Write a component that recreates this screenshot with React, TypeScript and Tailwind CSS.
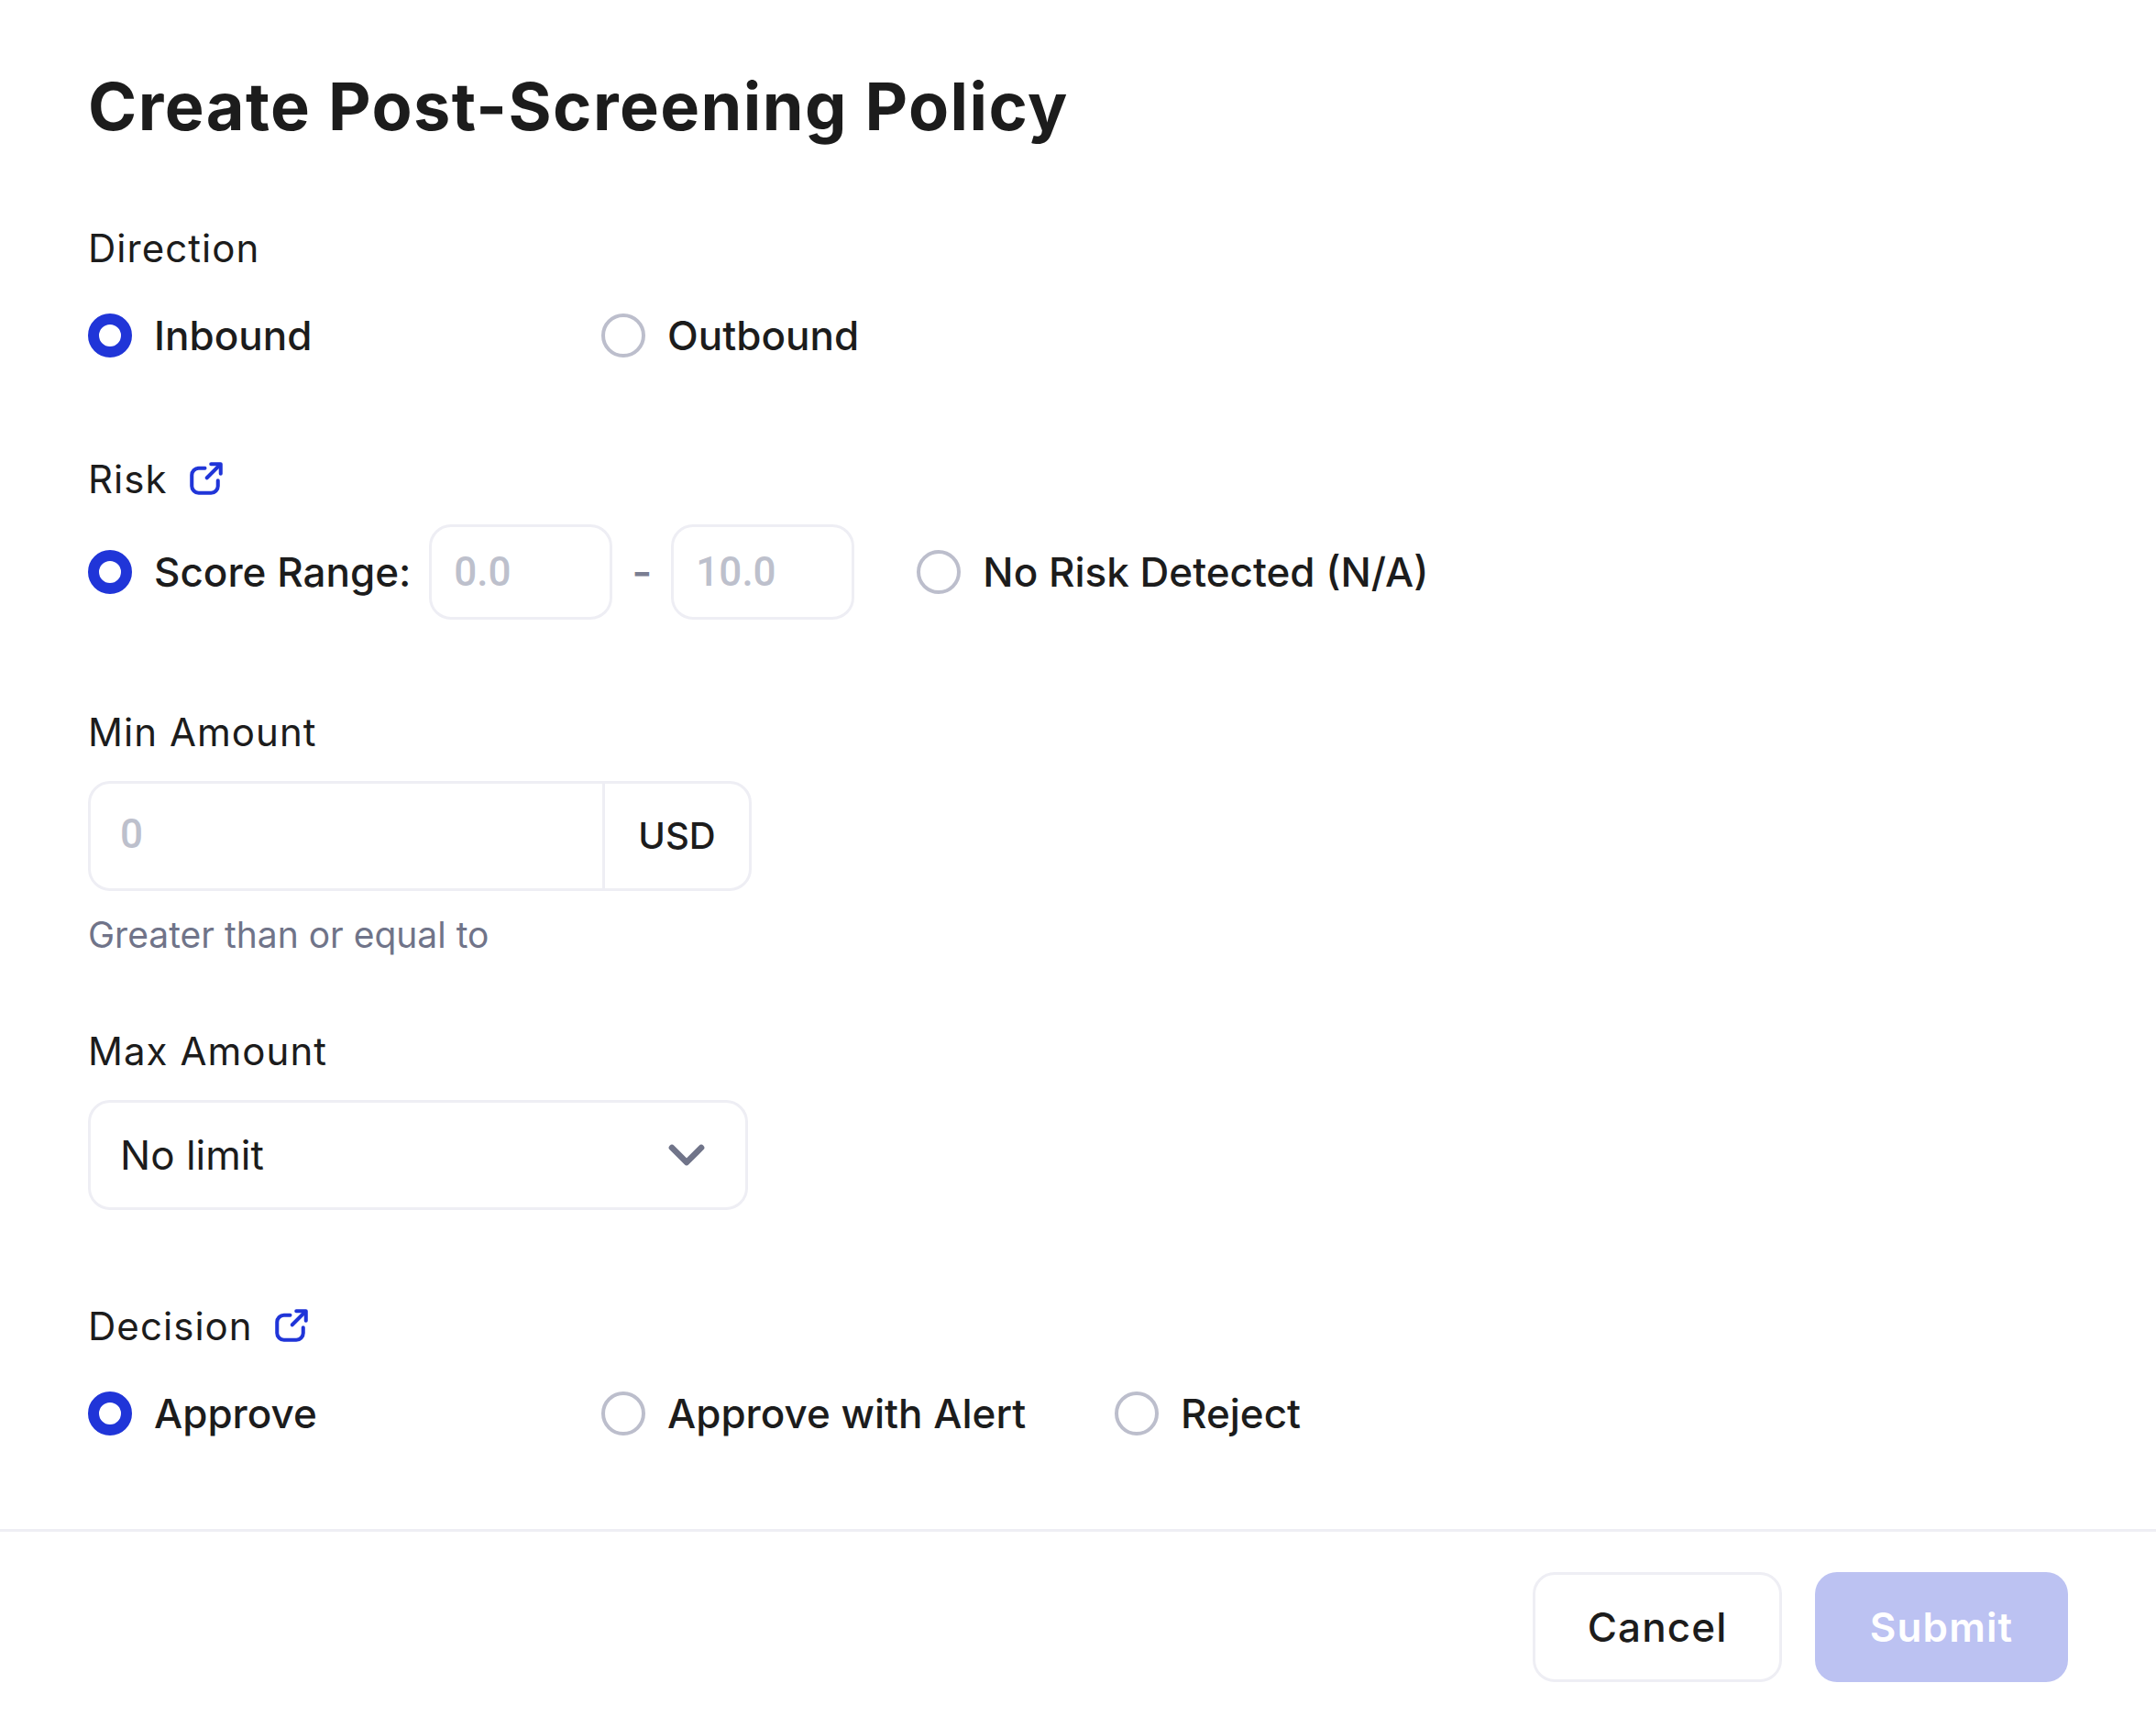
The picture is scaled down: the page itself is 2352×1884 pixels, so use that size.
import { ChevronDown } from "lucide-react";

const Radio = ({ checked, label }: { checked?: boolean; label: string }) => (
  <div className="flex items-center gap-6">
    <span
      className={
        checked
          ? "size-12 shrink-0 rounded-full border-12 border-[#2035d8] bg-white"
          : "size-12 shrink-0 rounded-full border-4 border-[#bcbecc] bg-white"
      }
    />
    <span className="whitespace-nowrap text-[44px] font-medium leading-15">{label}</span>
  </div>
);

const Label = ({ children }: { children: React.ReactNode }) => (
  <div className="flex h-15 items-center gap-6 text-[42px] tracking-wide text-[#1c1c1c]">
    {children}
  </div>
);

const LinkIcon = () => (
  <svg
    viewBox="0 0 24 24"
    fill="none"
    stroke="currentColor"
    strokeWidth={2.7}
    strokeLinecap="round"
    strokeLinejoin="round"
    className="size-9 text-[#2035d8]"
  >
    <path d="M11 4.5H6.5a5 5 0 0 0-5 5v8a5 5 0 0 0 5 5h9a5 5 0 0 0 5-5v-4" />
    <path d="M12.5 11.5 21 3" />
    <path d="M15.5 1.5h7v7" />
  </svg>
);

export default function App() {
  return (
    <div className="flex min-h-screen flex-col bg-white font-['Inter',sans-serif] text-[#1c1c1c]">
      <div className="flex flex-col px-24 pt-20">
        <h1 className="text-7xl font-bold tracking-[0.02em]">Create Post-Screening Policy</h1>

        <div className="mt-22">
          <Label>Direction</Label>
          <div className="mt-9 flex">
            <div className="w-140">
              <Radio checked label="Inbound" />
            </div>
            <Radio label="Outbound" />
          </div>
        </div>

        <div className="mt-24">
          <Label>
            Risk <LinkIcon />
          </Label>
          <div className="mt-5 flex items-center">
            <Radio checked label="Score Range:" />
            <input
              placeholder="0.0"
              className="ml-5 h-26 w-50 rounded-3xl border-3 border-[#eeeef4] px-6 font-['Roboto',sans-serif] text-[44px] font-medium placeholder:text-[#bdc0cc]"
            />
            <span className="w-16 text-center text-5xl font-medium text-[#7a7e92]">-</span>
            <input
              placeholder="10.0"
              className="h-26 w-50 rounded-3xl border-3 border-[#eeeef4] px-6 font-['Roboto',sans-serif] text-[44px] font-medium placeholder:text-[#bdc0cc]"
            />
            <div className="ml-17">
              <Radio label="No Risk Detected (N/A)" />
            </div>
          </div>
        </div>

        <div className="mt-23">
          <Label>Min Amount</Label>
          <div className="mt-6 flex h-30 w-181 rounded-3xl border-3 border-[#eeeef4]">
            <input
              placeholder="0"
              className="min-w-0 flex-1 px-8 pb-1 font-['Roboto',sans-serif] text-[44px] font-medium placeholder:text-[#bdc0cc]"
            />
            <div className="flex w-40 items-center justify-center border-l-3 border-[#eeeef4] text-[40px] font-medium">
              USD
            </div>
          </div>
          <p className="mt-6 text-[39px] leading-12 text-[#707489]">Greater than or equal to</p>
        </div>

        <div className="mt-18">
          <Label>Max Amount</Label>
          <div className="mt-6 flex h-30 w-180 items-center justify-between rounded-3xl border-3 border-[#eeeef4] px-8">
            <span className="text-[44px]">No limit</span>
            <ChevronDown className="size-16 text-[#707489]" strokeWidth={2.5} />
          </div>
        </div>

        <div className="mt-24">
          <Label>
            Decision <LinkIcon />
          </Label>
          <div className="mt-9 flex">
            <div className="w-140">
              <Radio checked label="Approve" />
            </div>
            <div className="w-140">
              <Radio label="Approve with Alert" />
            </div>
            <Radio label="Reject" />
          </div>
        </div>
      </div>

      <div className="mt-24 flex justify-end gap-9 border-t-3 border-[#eeeef4] px-24 pt-11 pb-12">
        <button className="h-30 w-68 rounded-3xl border-3 border-[#eeeef4] bg-white text-[44px] font-medium tracking-wide">
          Cancel
        </button>
        <button className="h-30 w-69 rounded-3xl bg-[#bcc2f2] text-[44px] font-semibold tracking-wide text-white">
          Submit
        </button>
      </div>
    </div>
  );
}
